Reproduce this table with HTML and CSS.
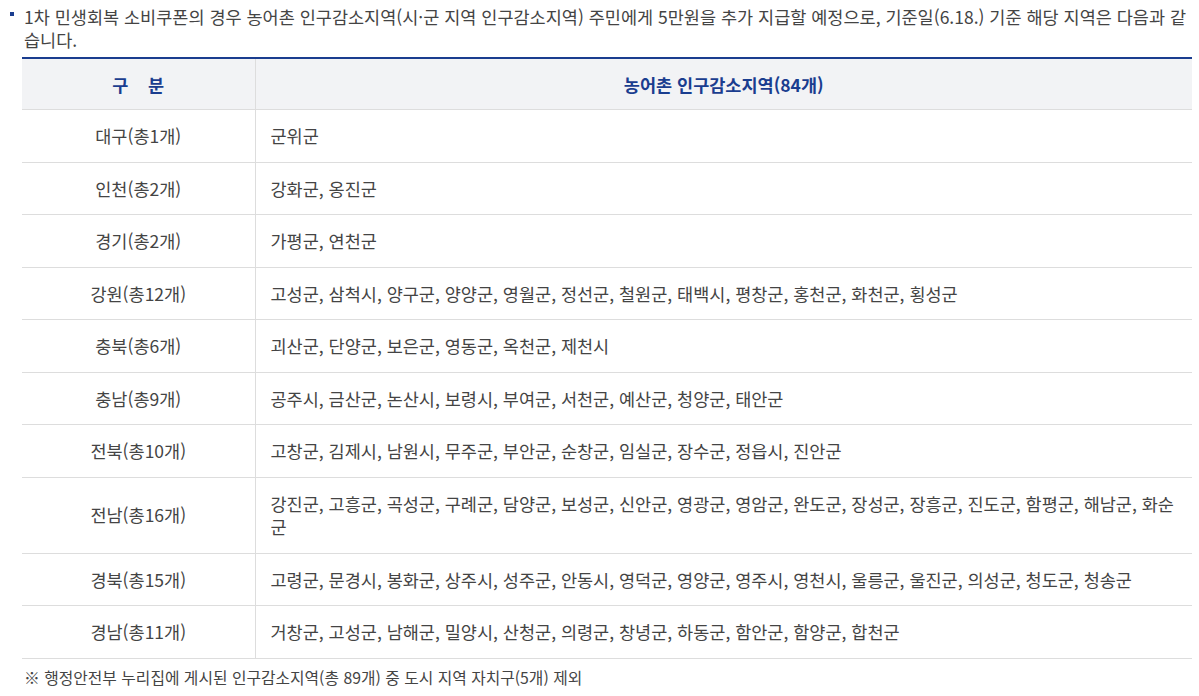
FILE: index.html
```html
<!DOCTYPE html>
<html lang="ko">
<head>
<meta charset="utf-8">
<link rel="stylesheet" href="styles.css">
</head>
<body>
<div class="page">
  <p class="bullet">1차 민생회복 소비쿠폰의 경우 농어촌 인구감소지역(시·군 지역 인구감소지역) 주민에게 5만원을 추가 지급할 예정으로, 기준일(6.18.) 기준 해당 지역은 다음과 같습니다.</p>
  <table class="regions">
    <colgroup><col class="c1"><col class="c2"></colgroup>
    <thead>
      <tr><th>구&nbsp;&nbsp;&nbsp;&nbsp;분</th><th>농어촌 인구감소지역(84개)</th></tr>
    </thead>
    <tbody>
      <tr><td class="name">대구(총1개)</td><td>군위군</td></tr>
      <tr><td class="name">인천(총2개)</td><td>강화군, 옹진군</td></tr>
      <tr><td class="name">경기(총2개)</td><td>가평군, 연천군</td></tr>
      <tr><td class="name">강원(총12개)</td><td>고성군, 삼척시, 양구군, 양양군, 영월군, 정선군, 철원군, 태백시, 평창군, 홍천군, 화천군, 횡성군</td></tr>
      <tr><td class="name">충북(총6개)</td><td>괴산군, 단양군, 보은군, 영동군, 옥천군, 제천시</td></tr>
      <tr><td class="name">충남(총9개)</td><td>공주시, 금산군, 논산시, 보령시, 부여군, 서천군, 예산군, 청양군, 태안군</td></tr>
      <tr><td class="name">전북(총10개)</td><td>고창군, 김제시, 남원시, 무주군, 부안군, 순창군, 임실군, 장수군, 정읍시, 진안군</td></tr>
      <tr><td class="name">전남(총16개)</td><td>강진군, 고흥군, 곡성군, 구례군, 담양군, 보성군, 신안군, 영광군, 영암군, 완도군, 장성군, 장흥군, 진도군, 함평군, 해남군, 화순군</td></tr>
      <tr><td class="name">경북(총15개)</td><td>고령군, 문경시, 봉화군, 상주시, 성주군, 안동시, 영덕군, 영양군, 영주시, 영천시, 울릉군, 울진군, 의성군, 청도군, 청송군</td></tr>
      <tr><td class="name">경남(총11개)</td><td>거창군, 고성군, 남해군, 밀양시, 산청군, 의령군, 창녕군, 하동군, 함안군, 함양군, 합천군</td></tr>
    </tbody>
  </table>
  <p class="note">※ 행정안전부 누리집에 게시된 인구감소지역(총 89개) 중 도시 지역 자치구(5개) 제외</p>
</div>
</body>
</html>
```
FILE: styles.css
```css
html, body {
  margin: 0;
  padding: 0;
  background: #fff;
}
body {
  font-family: "Noto Sans CJK KR", "Noto Sans", sans-serif;
  font-size: 17.5px;
  color: #444;
}
.page {
  padding: 5px 5px 0 22px;
}
.bullet {
  position: relative;
  margin: 0 0 6px 2px;
  line-height: 23px;
}
.bullet::before {
  content: "";
  position: absolute;
  left: -14px;
  top: 7px;
  width: 4px;
  height: 4px;
  background: #1a3d8f;
}
.regions {
  width: 1170px;
  border-collapse: collapse;
  border-top: 2px solid #1a3d8f;
  table-layout: fixed;
}
.c1 { width: 233px; }
.regions th {
  background: #f2f3f5;
  color: #1a3d8f;
  font-weight: bold;
  height: 50px;
  padding: 0;
  line-height: 23px;
  border-bottom: 1px solid #ddd;
  border-left: 1px solid #ddd;
  text-align: center;
}
.regions th:first-child,
.regions td:first-child {
  border-left: none;
}
.regions td {
  border-bottom: 1px solid #ddd;
  border-left: 1px solid #ddd;
  padding: 14px 14px 14px 15px;
  line-height: 23.5px;
  vertical-align: middle;
  text-align: left;
}
.regions td.name {
  text-align: center;
  padding-left: 0;
  padding-right: 0;
}
.note {
  margin: 7px 0 0 2px;
  font-size: 15.8px;
  line-height: 23px;
}
```
